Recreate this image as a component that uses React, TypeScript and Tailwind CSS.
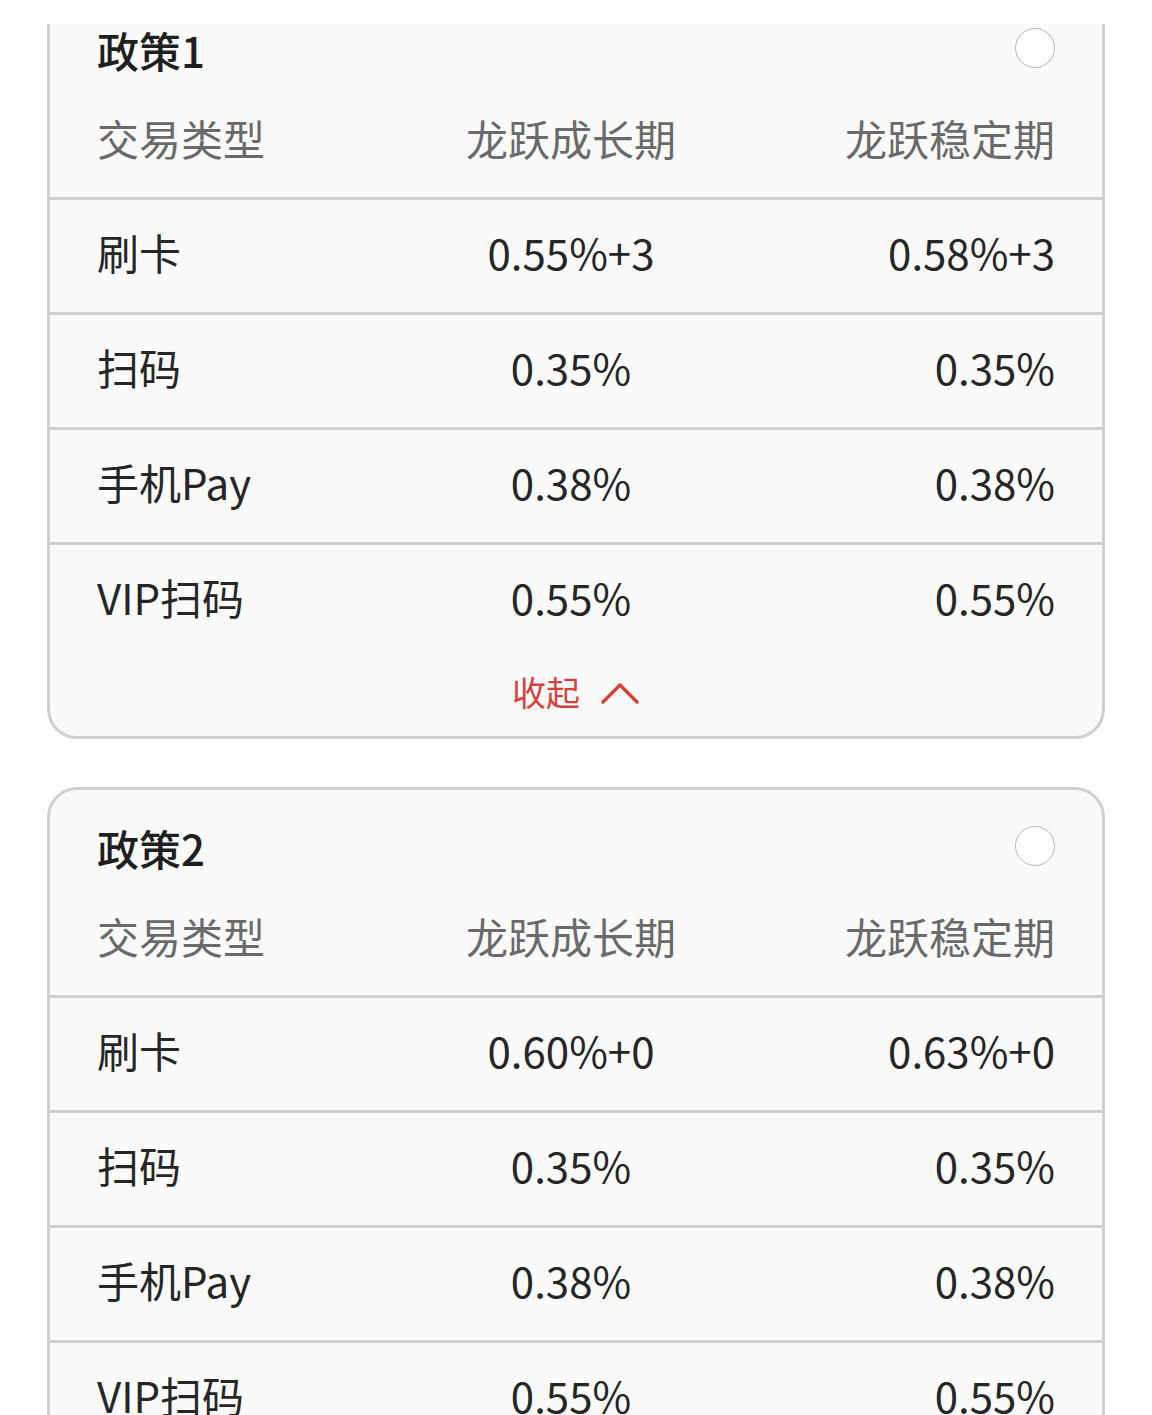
const policies = [
  {
    name: "政策1",
    expanded: true,
    rows: [
      ["刷卡", "0.55%+3", "0.58%+3"],
      ["扫码", "0.35%", "0.35%"],
      ["手机Pay", "0.38%", "0.38%"],
      ["VIP扫码", "0.55%", "0.55%"],
    ],
  },
  {
    name: "政策2",
    expanded: false,
    rows: [
      ["刷卡", "0.60%+0", "0.63%+0"],
      ["扫码", "0.35%", "0.35%"],
      ["手机Pay", "0.38%", "0.38%"],
      ["VIP扫码", "0.55%", "0.55%"],
    ],
  },
];

function PolicyCard({ policy, first }: { policy: (typeof policies)[number]; first?: boolean }) {
  return (
    <div
      className={`mx-[47px] rounded-[30px] border-[3px] border-[#cfcfcf] bg-[#fafafa] overflow-hidden ${
        first ? "-mt-[35px]" : "mt-[48px]"
      }`}
    >
      {/* title + radio */}
      <div className="flex items-start justify-between pl-[47px] pr-[47px] pt-[36px]">
        <div className="text-[42px] leading-[48px] font-medium text-[#1f1f1f] -mt-[2px] pb-[2px]">{policy.name}</div>
        <div className="w-[40px] h-[40px] rounded-full border-[1.5px] border-[#b5b5b5] bg-white"></div>
      </div>

      {/* header */}
      <div className="grid grid-cols-[364px_220px_1fr] pl-[47px] pr-[47px] pt-[38px] pb-[35px] text-[42px] leading-[48px] text-[#6a6a6a]">
        <div>交易类型</div>
        <div className="text-center whitespace-nowrap">龙跃成长期</div>
        <div className="text-right whitespace-nowrap">龙跃稳定期</div>
      </div>

      {policy.rows.map((r) => (
        <div
          key={r[0]}
          className="grid grid-cols-[364px_220px_1fr] items-center h-[115px] border-t-[3px] border-[#cfcfcf] pl-[47px] pr-[47px] pb-[8px] text-[42px] leading-[48px] text-[#262626]"
        >
          <div className="whitespace-nowrap">{r[0]}</div>
          <div className="text-center whitespace-nowrap">{r[1]}</div>
          <div className="text-right whitespace-nowrap">{r[2]}</div>
        </div>
      ))}

      {policy.expanded && (
        <div className="flex items-center justify-center gap-[20px] pt-[15px] pb-[24px] text-[34px] leading-[40px] text-[#d6423a]">
          <span>收起</span>
          <svg width="40" height="24" viewBox="0 0 40 24" fill="none" className="mt-[2px]">
            <path d="M3 21 L20 4 L37 21" stroke="#d6423a" strokeWidth="3.5" strokeLinecap="round" strokeLinejoin="round" />
          </svg>
        </div>
      )}
    </div>
  );
}

export default function App() {
  return (
    <div
      className="w-[1152px] h-[1415px] bg-white overflow-hidden"
      style={{ fontFamily: '"Noto Sans CJK SC", "Noto Sans", sans-serif' }}
    >
      <div className="h-[24px] bg-white"></div>
      <div className="h-[1391px] overflow-hidden">
        <PolicyCard policy={policies[0]} first />
        <PolicyCard policy={policies[1]} />
      </div>
    </div>
  );
}
